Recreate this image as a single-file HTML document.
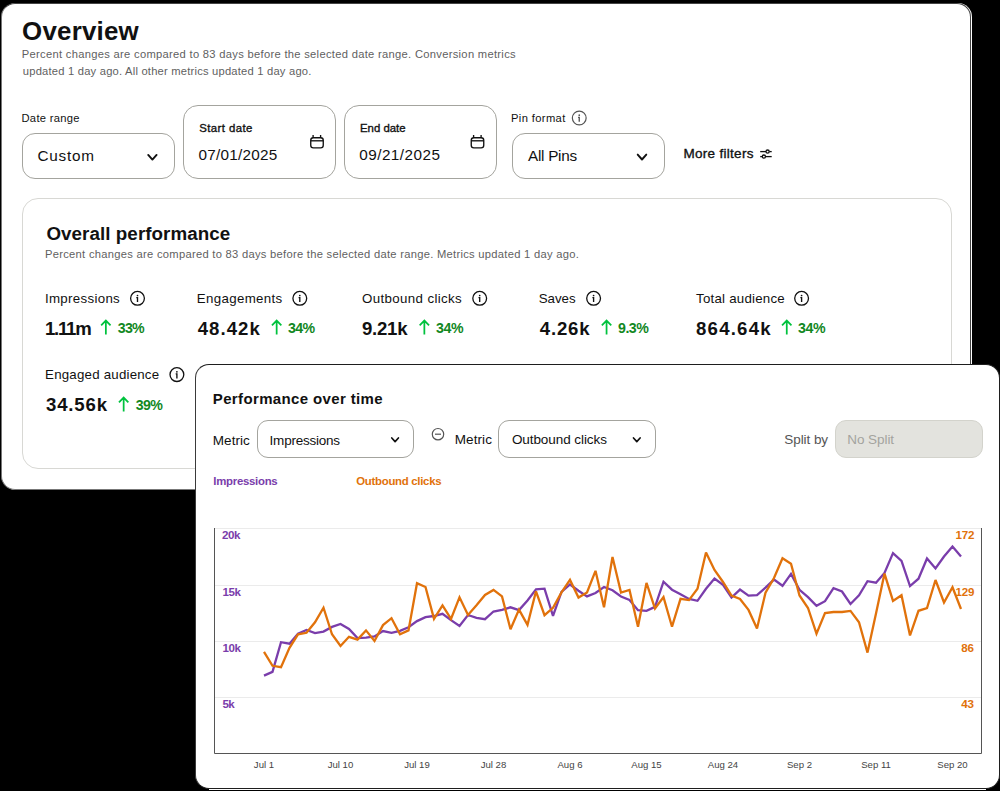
<!DOCTYPE html>
<html><head><meta charset="utf-8">
<style>
*{box-sizing:border-box;margin:0;padding:0}
html,body{width:1000px;height:791px;overflow:hidden;background:#000}
body{position:relative;font-family:"Liberation Sans",sans-serif;color:#111}
.a{position:absolute;white-space:nowrap;line-height:1}
.card1{position:absolute;left:1px;top:3px;width:970px;height:487px;background:#fff;border:1px solid #444;border-left-color:#777;border-bottom-color:#777;border-radius:14px;box-shadow:1px 0 0 0 #fff}
.inner{position:absolute;left:22px;top:198px;width:930px;height:271px;border:1px solid #d8d8d4;border-radius:16px}
.card2{position:absolute;left:195px;top:364px;width:805px;height:425px;background:#fff;border:1px solid #1e1e1e;border-left-color:#3a3a3a;border-radius:14px}
.box{position:absolute;border:1px solid #a4a49e;border-radius:13px;background:#fff}
.xl{position:absolute;top:760px;width:80px;margin-left:-40px;text-align:center;font-size:9.6px;line-height:1;color:#444;white-space:nowrap}
</style></head><body>
<div class="card1"></div>
<div class="a" style="left:22.1px;top:18.77px;font-size:25.9px;font-weight:700;letter-spacing:0.2px;color:#111111;">Overview</div>
<div class="a" style="left:21.8px;top:48.52px;font-size:11.2px;font-weight:400;letter-spacing:0.294px;color:#5f5f5f;">Percent changes are compared to 83 days before the selected date range. Conversion metrics</div>
<div class="a" style="left:22.8px;top:65.52px;font-size:11.2px;font-weight:400;letter-spacing:0.207px;color:#5f5f5f;">updated 1 day ago. All other metrics updated 1 day ago.</div>
<div class="a" style="left:21.5px;top:112.62px;font-size:11.2px;font-weight:400;letter-spacing:0.289px;color:#111111;">Date range</div>
<div class="box" style="left:22px;top:133px;width:153px;height:46px"></div>
<div class="a" style="left:37.5px;top:147.85px;font-size:15.3px;font-weight:400;letter-spacing:0.74px;color:#111111;">Custom</div>
<div class="box" style="left:183px;top:105px;width:153px;height:74px;border-radius:15px"></div>
<div class="a" style="left:199.2px;top:122.55px;font-size:11.4px;font-weight:400;letter-spacing:0.422px;color:#111111;-webkit-text-stroke:0.35px currentColor;">Start date</div>
<div class="a" style="left:198.4px;top:147.05px;font-size:15.3px;font-weight:400;letter-spacing:0.267px;color:#111111;">07/01/2025</div>
<div class="box" style="left:343.5px;top:105px;width:153px;height:74px;border-radius:15px"></div>
<div class="a" style="left:360px;top:122.55px;font-size:11.4px;font-weight:400;letter-spacing:-0.014px;color:#111111;-webkit-text-stroke:0.35px currentColor;">End date</div>
<div class="a" style="left:359.2px;top:147.05px;font-size:15.3px;font-weight:400;letter-spacing:0.478px;color:#111111;">09/21/2025</div>
<div class="a" style="left:511px;top:113.32px;font-size:11.2px;font-weight:400;letter-spacing:0.367px;color:#111111;">Pin format</div>
<div class="box" style="left:512px;top:133px;width:153px;height:46px"></div>
<div class="a" style="left:528px;top:148.05px;font-size:15.3px;font-weight:400;letter-spacing:-0.271px;color:#111111;">All Pins</div>
<div class="a" style="left:683.4px;top:147.27px;font-size:13.5px;font-weight:400;letter-spacing:0.3px;color:#111111;-webkit-text-stroke:0.35px currentColor;">More filters</div>
<div class="inner"></div>
<div class="a" style="left:46.4px;top:224.98px;font-size:18.8px;font-weight:700;letter-spacing:0.067px;color:#111111;">Overall performance</div>
<div class="a" style="left:45px;top:248.62px;font-size:11.2px;font-weight:400;letter-spacing:0.278px;color:#5f5f5f;">Percent changes are compared to 83 days before the selected date range. Metrics updated 1 day ago.</div>
<div class="a" style="left:44.9px;top:291.74px;font-size:13.3px;font-weight:400;letter-spacing:0.32px;color:#111111;">Impressions</div>
<div class="a" style="left:196.7px;top:291.74px;font-size:13.3px;font-weight:400;letter-spacing:0.35px;color:#111111;">Engagements</div>
<div class="a" style="left:362px;top:291.74px;font-size:13.3px;font-weight:400;letter-spacing:0.364px;color:#111111;">Outbound clicks</div>
<div class="a" style="left:538.7px;top:291.74px;font-size:13.3px;font-weight:400;letter-spacing:0.0px;color:#111111;">Saves</div>
<div class="a" style="left:696px;top:291.74px;font-size:13.3px;font-weight:400;letter-spacing:0.231px;color:#111111;">Total audience</div>
<div class="a" style="left:45.1px;top:368.04px;font-size:13.3px;font-weight:400;letter-spacing:0.207px;color:#111111;">Engaged audience</div>
<div class="a" style="left:44.9px;top:319.65px;font-size:18.6px;font-weight:700;letter-spacing:-1.2px;color:#111111;">1.11m</div>
<div class="a" style="left:197.7px;top:319.65px;font-size:18.6px;font-weight:700;letter-spacing:1.06px;color:#111111;">48.42k</div>
<div class="a" style="left:362px;top:319.65px;font-size:18.6px;font-weight:700;letter-spacing:-0.25px;color:#111111;">9.21k</div>
<div class="a" style="left:539.7px;top:319.65px;font-size:18.6px;font-weight:700;letter-spacing:0.85px;color:#111111;">4.26k</div>
<div class="a" style="left:696px;top:319.65px;font-size:18.6px;font-weight:700;letter-spacing:1.233px;color:#111111;">864.64k</div>
<div class="a" style="left:46px;top:395.75px;font-size:18.6px;font-weight:700;letter-spacing:0.84px;color:#111111;">34.56k</div>
<div class="a" style="left:117.7px;top:320.98px;font-size:14.2px;font-weight:700;letter-spacing:-0.7px;color:#12881f;">33%</div>
<div class="a" style="left:288px;top:320.98px;font-size:14.2px;font-weight:700;letter-spacing:-0.7px;color:#12881f;">34%</div>
<div class="a" style="left:436px;top:320.98px;font-size:14.2px;font-weight:700;letter-spacing:-0.45px;color:#12881f;">34%</div>
<div class="a" style="left:618.1px;top:320.98px;font-size:14.2px;font-weight:700;letter-spacing:-0.533px;color:#12881f;">9.3%</div>
<div class="a" style="left:798px;top:320.98px;font-size:14.2px;font-weight:700;letter-spacing:-0.35px;color:#12881f;">34%</div>
<div class="a" style="left:135.7px;top:398.18px;font-size:14.2px;font-weight:700;letter-spacing:-0.65px;color:#12881f;">39%</div>
<svg width="1000" height="791" style="position:absolute;left:0;top:0"><polyline points="148.20000000000002,154.9 152.4,159.6 156.6,154.9" fill="none" stroke="#111" stroke-width="1.9" stroke-linecap="round" stroke-linejoin="round"/><polyline points="637.6999999999999,154.6 642.0,159.5 646.3000000000001,154.6" fill="none" stroke="#111" stroke-width="1.9" stroke-linecap="round" stroke-linejoin="round"/><rect x="310.75" y="137.75" width="12.5" height="10.1" rx="2.6" fill="none" stroke="#111" stroke-width="1.35"/><line x1="310.75" y1="140.8" x2="323.25" y2="140.8" stroke="#111" stroke-width="1.35"/><line x1="313.1" y1="135" x2="313.1" y2="138" stroke="#111" stroke-width="1.35"/><line x1="320.6" y1="135" x2="320.6" y2="138" stroke="#111" stroke-width="1.35"/><rect x="471.25" y="137.75" width="12.5" height="10.1" rx="2.6" fill="none" stroke="#111" stroke-width="1.35"/><line x1="471.25" y1="140.8" x2="483.75" y2="140.8" stroke="#111" stroke-width="1.35"/><line x1="473.6" y1="135" x2="473.6" y2="138" stroke="#111" stroke-width="1.35"/><line x1="481.1" y1="135" x2="481.1" y2="138" stroke="#111" stroke-width="1.35"/><circle cx="579.25" cy="118" r="6.9" fill="none" stroke="#555" stroke-width="1.2"/><circle cx="579.25" cy="115.2" r="0.85" fill="#555"/><path d="M578.05,117.3 H579.25 V121.8" fill="none" stroke="#555" stroke-width="1.35"/><circle cx="137.5" cy="298.3" r="6.9" fill="none" stroke="#111" stroke-width="1.3"/><circle cx="137.5" cy="295.5" r="0.85" fill="#111"/><path d="M136.3,297.6 H137.5 V302.1" fill="none" stroke="#111" stroke-width="1.35"/><circle cx="299.8" cy="298.3" r="6.9" fill="none" stroke="#111" stroke-width="1.3"/><circle cx="299.8" cy="295.5" r="0.85" fill="#111"/><path d="M298.6,297.6 H299.8 V302.1" fill="none" stroke="#111" stroke-width="1.35"/><circle cx="479.7" cy="298.3" r="6.9" fill="none" stroke="#111" stroke-width="1.3"/><circle cx="479.7" cy="295.5" r="0.85" fill="#111"/><path d="M478.5,297.6 H479.7 V302.1" fill="none" stroke="#111" stroke-width="1.35"/><circle cx="593.6" cy="298.3" r="6.9" fill="none" stroke="#111" stroke-width="1.3"/><circle cx="593.6" cy="295.5" r="0.85" fill="#111"/><path d="M592.4,297.6 H593.6 V302.1" fill="none" stroke="#111" stroke-width="1.35"/><circle cx="801.6" cy="298.3" r="6.9" fill="none" stroke="#111" stroke-width="1.3"/><circle cx="801.6" cy="295.5" r="0.85" fill="#111"/><path d="M800.4,297.6 H801.6 V302.1" fill="none" stroke="#111" stroke-width="1.35"/><circle cx="176.9" cy="374.6" r="6.9" fill="none" stroke="#111" stroke-width="1.3"/><circle cx="176.9" cy="371.8" r="0.85" fill="#111"/><path d="M175.70000000000002,373.90000000000003 H176.9 V378.40000000000003" fill="none" stroke="#111" stroke-width="1.35"/><path d="M101.16,325.3 L105.86,320.6 L110.56,325.3 M105.86,320.90000000000003 V334.6" fill="none" stroke="#00c23e" stroke-width="1.75" stroke-linejoin="miter" stroke-linecap="butt"/><path d="M271.96000000000004,325.3 L276.66,320.6 L281.36,325.3 M276.66,320.90000000000003 V334.6" fill="none" stroke="#00c23e" stroke-width="1.75" stroke-linejoin="miter" stroke-linecap="butt"/><path d="M419.66,325.3 L424.36,320.6 L429.06,325.3 M424.36,320.90000000000003 V334.6" fill="none" stroke="#00c23e" stroke-width="1.75" stroke-linejoin="miter" stroke-linecap="butt"/><path d="M601.8599999999999,325.3 L606.56,320.6 L611.26,325.3 M606.56,320.90000000000003 V334.6" fill="none" stroke="#00c23e" stroke-width="1.75" stroke-linejoin="miter" stroke-linecap="butt"/><path d="M782.06,325.3 L786.76,320.6 L791.46,325.3 M786.76,320.90000000000003 V334.6" fill="none" stroke="#00c23e" stroke-width="1.75" stroke-linejoin="miter" stroke-linecap="butt"/><path d="M118.96,402.3 L123.66,397.6 L128.35999999999999,402.3 M123.66,397.90000000000003 V411.6" fill="none" stroke="#00c23e" stroke-width="1.75" stroke-linejoin="miter" stroke-linecap="butt"/><g fill="none" stroke="#111" stroke-width="1.3"><line x1="760.2" y1="151.6" x2="766" y2="151.6"/><line x1="769.3" y1="151.6" x2="771.7" y2="151.6"/><circle cx="767.6" cy="151.6" r="1.6" fill="#fff"/><line x1="760.2" y1="156.6" x2="762.2" y2="156.6"/><line x1="765.6" y1="156.6" x2="771.7" y2="156.6"/><circle cx="763.9" cy="156.6" r="1.6" fill="#fff"/></g></svg>
<div class="card2"></div><div style="position:absolute;left:209px;top:789px;width:777px;height:1px;background:#fff"></div>
<div class="box" style="left:256.5px;top:420px;width:157px;height:38px;border-radius:11px"></div>
<div class="box" style="left:498px;top:420px;width:158px;height:38px;border-radius:11px"></div>
<div class="box" style="left:835px;top:420px;width:148px;height:38px;border-radius:11px;background:#e3e3de;border-color:#d3d3cc"></div>
<div class="a" style="left:212.8px;top:390.8px;font-size:15.0px;font-weight:700;letter-spacing:0.365px;color:#111111;">Performance over time</div>
<div class="a" style="left:212.8px;top:433.57px;font-size:13.5px;font-weight:400;letter-spacing:0.06px;color:#111111;">Metric</div>
<div class="a" style="left:269.6px;top:433.57px;font-size:13.5px;font-weight:400;letter-spacing:-0.23px;color:#111111;">Impressions</div>
<div class="a" style="left:454.7px;top:433.47px;font-size:13.5px;font-weight:400;letter-spacing:0.1px;color:#111111;">Metric</div>
<div class="a" style="left:511.9px;top:433.47px;font-size:13.5px;font-weight:400;letter-spacing:-0.071px;color:#111111;">Outbound clicks</div>
<div class="a" style="left:784.3px;top:433.47px;font-size:13.5px;font-weight:400;letter-spacing:-0.071px;color:#555555;">Split by</div>
<div class="a" style="left:847.3px;top:433.47px;font-size:13.5px;font-weight:400;letter-spacing:-0.071px;color:#a3a39e;">No Split</div>
<div class="a" style="left:213.3px;top:475.85px;font-size:11.4px;font-weight:700;letter-spacing:-0.27px;color:#7a3dab;">Impressions</div>
<div class="a" style="left:356.3px;top:475.85px;font-size:11.4px;font-weight:700;letter-spacing:-0.286px;color:#e1720b;">Outbound clicks</div>
<svg width="1000" height="791" style="position:absolute;left:0;top:0"><polyline points="391.79999999999995,438.0 395.1,441.6 398.40000000000003,438.0" fill="none" stroke="#111" stroke-width="1.7" stroke-linecap="round" stroke-linejoin="round"/><polyline points="633.5,438.0 636.8,441.6 640.1,438.0" fill="none" stroke="#111" stroke-width="1.7" stroke-linecap="round" stroke-linejoin="round"/><circle cx="438" cy="434.2" r="5.7" fill="none" stroke="#555" stroke-width="1.2"/><line x1="435" y1="434.2" x2="441" y2="434.2" stroke="#555" stroke-width="1.2"/></svg>
<svg class="chart" width="1000" height="791" viewBox="0 0 1000 791" style="position:absolute;left:0;top:0">
<g stroke="#ebebeb" stroke-width="1">
<line x1="215" y1="528.5" x2="981" y2="528.5"/>
<line x1="215" y1="585.5" x2="981" y2="585.5"/>
<line x1="215" y1="641.5" x2="981" y2="641.5"/>
<line x1="215" y1="697.5" x2="981" y2="697.5"/>
</g>
<polyline points="214.5,528 214.5,753.5 981.5,753.5 981.5,528" fill="none" stroke="#555" stroke-width="1"/>
<polyline fill="none" stroke="#7a3dab" stroke-width="2.3" stroke-linejoin="miter" stroke-miterlimit="3" points="264.0,675.6 272.5,671.8 281.0,642.2 289.5,643.7 298.0,633.7 306.5,630.0 315.0,633.1 323.5,631.6 332.0,626.9 340.5,624.0 349.0,629.0 357.5,638.1 366.0,637.6 374.5,636.4 383.0,631.0 391.5,632.8 400.0,630.8 408.5,627.3 417.0,621.1 425.5,617.1 434.0,616.0 442.5,613.8 451.0,620.1 459.5,626.0 468.0,615.0 476.5,617.8 485.0,619.2 493.5,611.5 502.0,609.8 510.5,607.3 519.0,610.1 527.5,600.4 536.0,589.4 544.5,588.7 553.0,615.8 561.5,591.9 570.0,584.5 578.5,590.7 587.0,596.4 595.5,593.0 604.0,587.0 612.5,590.3 621.0,596.5 629.5,600.0 638.0,610.2 646.5,610.8 655.0,606.8 663.5,581.7 672.0,589.7 680.5,594.3 689.0,598.9 697.5,600.8 706.0,588.8 714.5,578.6 723.0,584.8 731.5,597.6 740.0,589.6 748.5,595.6 757.0,595.1 765.5,587.7 774.0,579.6 782.5,585.8 791.0,573.9 799.5,589.8 808.0,597.2 816.5,605.8 825.0,601.2 833.5,588.1 842.0,591.5 850.5,604.0 859.0,595.4 867.5,581.2 876.0,582.7 884.5,573.0 893.0,553.1 901.5,561.0 910.0,586.1 918.5,578.7 927.0,558.5 935.5,568.4 944.0,556.5 952.5,546.6 961.0,556.4"/>
<polyline fill="none" stroke="#e1720b" stroke-width="2.3" stroke-linejoin="miter" stroke-miterlimit="3" points="264.0,651.9 272.5,665.8 281.0,667.2 289.5,647.9 298.0,634.3 306.5,632.8 315.0,622.3 323.5,607.7 332.0,634.3 340.5,646.0 349.0,636.8 357.5,639.6 366.0,630.4 374.5,641.0 383.0,625.1 391.5,618.2 400.0,634.2 408.5,630.4 417.0,583.2 425.5,587.0 434.0,618.9 442.5,605.3 451.0,618.9 459.5,597.3 468.0,615.0 476.5,605.3 485.0,595.0 493.5,589.9 502.0,596.4 510.5,629.2 519.0,609.6 527.5,624.9 536.0,591.3 544.5,615.2 553.0,607.8 561.5,592.4 570.0,579.9 578.5,597.5 587.0,592.4 595.5,570.8 604.0,607.2 612.5,557.0 621.0,592.5 629.5,590.0 638.0,626.7 646.5,582.9 655.0,608.5 663.5,597.1 672.0,626.7 680.5,598.8 689.0,600.1 697.5,588.8 706.0,552.4 714.5,570.0 723.0,582.0 731.5,595.6 740.0,599.0 748.5,609.9 757.0,628.6 765.5,592.8 774.0,578.0 782.5,558.2 791.0,563.7 799.5,595.5 808.0,608.0 816.5,633.6 825.0,613.1 833.5,612.0 842.0,612.0 850.5,610.9 859.0,622.2 867.5,652.6 876.0,613.4 884.5,573.6 893.0,600.9 901.5,595.2 910.0,635.5 918.5,610.8 927.0,608.2 935.5,580.0 944.0,602.5 952.5,587.3 961.0,609.0"/>
</svg>
<div class="a" style="left:222px;top:529.18px;font-size:11.6px;font-weight:700;letter-spacing:-0.4px;color:#7a3dab;">20k</div>
<div class="a" style="left:222.6px;top:585.88px;font-size:11.6px;font-weight:700;letter-spacing:-0.55px;color:#7a3dab;">15k</div>
<div class="a" style="left:222.6px;top:642.18px;font-size:11.6px;font-weight:700;letter-spacing:-0.55px;color:#7a3dab;">10k</div>
<div class="a" style="left:222.5px;top:698.18px;font-size:11.6px;font-weight:700;letter-spacing:-0.7px;color:#7a3dab;">5k</div>
<div class="a" style="left:955.4px;top:528.98px;font-size:11.6px;font-weight:700;letter-spacing:-0.2px;color:#e1720b;">172</div>
<div class="a" style="left:955.4px;top:585.88px;font-size:11.6px;font-weight:700;letter-spacing:-0.2px;color:#e1720b;">129</div>
<div class="a" style="left:961.3px;top:642.18px;font-size:11.6px;font-weight:700;letter-spacing:-0.3px;color:#e1720b;">86</div>
<div class="a" style="left:961.3px;top:698.18px;font-size:11.6px;font-weight:700;letter-spacing:-0.3px;color:#e1720b;">43</div>
<div class="xl" style="left:264.0px">Jul 1</div>
<div class="xl" style="left:340.5px">Jul 10</div>
<div class="xl" style="left:417.0px">Jul 19</div>
<div class="xl" style="left:493.5px">Jul 28</div>
<div class="xl" style="left:570.0px">Aug 6</div>
<div class="xl" style="left:646.5px">Aug 15</div>
<div class="xl" style="left:723.0px">Aug 24</div>
<div class="xl" style="left:799.5px">Sep 2</div>
<div class="xl" style="left:876.0px">Sep 11</div>
<div class="xl" style="left:952.5px">Sep 20</div>
</body></html>
